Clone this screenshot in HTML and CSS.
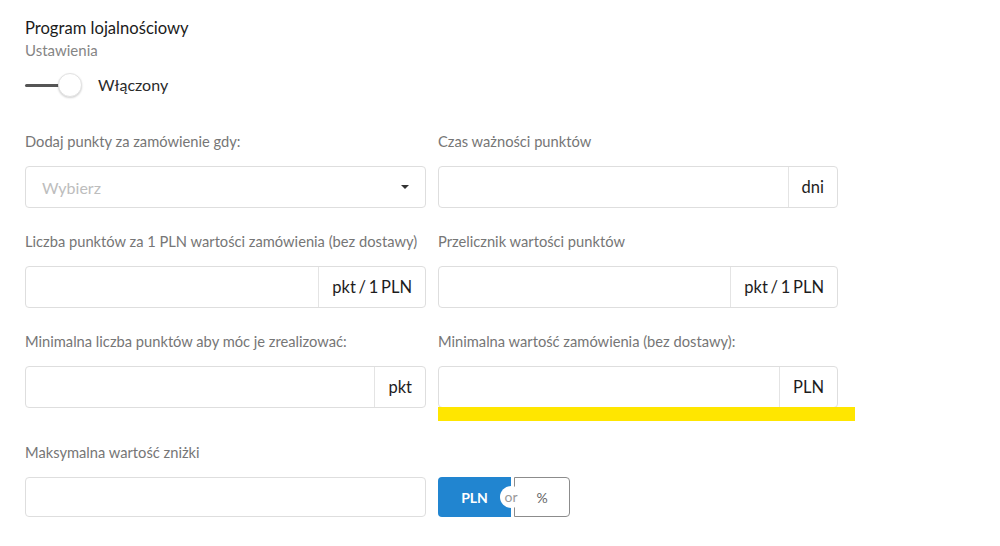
FILE: index.html
```html
<!DOCTYPE html>
<html lang="pl">
<head>
<meta charset="utf-8">
<title>Program lojalnościowy</title>
<link rel="stylesheet" href="styles.css">
</head>
<body>
<div class="page">
  <div class="title">Program lojalnościowy</div>
  <div class="subtitle">Ustawienia</div>
  <div class="toggle">
    <span class="switch"></span>
    <span class="toggle-label">Włączony</span>
  </div>

  <div class="form">
    <div class="cell">
      <div class="label">Dodaj punkty za zamówienie gdy:</div>
      <div class="input-group select">
        <span class="placeholder">Wybierz</span>
        <span class="caret"></span>
      </div>
    </div>
    <div class="cell">
      <div class="label">Czas ważności punktów</div>
      <div class="input-group">
        <span class="field"></span>
        <span class="addon">dni</span>
      </div>
    </div>

    <div class="cell">
      <div class="label">Liczba punktów za 1 PLN wartości zamówienia (bez dostawy)</div>
      <div class="input-group">
        <span class="field"></span>
        <span class="addon">pkt / 1 PLN</span>
      </div>
    </div>
    <div class="cell">
      <div class="label">Przelicznik wartości punktów</div>
      <div class="input-group">
        <span class="field"></span>
        <span class="addon">pkt / 1 PLN</span>
      </div>
    </div>

    <div class="cell">
      <div class="label">Minimalna liczba punktów aby móc je zrealizować:</div>
      <div class="input-group">
        <span class="field"></span>
        <span class="addon">pkt</span>
      </div>
    </div>
    <div class="cell">
      <div class="label">Minimalna wartość zamówienia (bez dostawy):</div>
      <div class="input-group">
        <span class="field"></span>
        <span class="addon">PLN</span>
      </div>
      <div class="highlight"></div>
    </div>

    <div class="cell">
      <div class="label">Maksymalna wartość zniżki</div>
      <div class="input-group short">
        <span class="field"></span>
      </div>
    </div>
    <div class="cell cell-end">
      <div class="btn-group">
        <span class="btn-pln">PLN<span class="or">or</span></span>
        <span class="btn-pct">%</span>
      </div>
    </div>
  </div>
</div>
</body>
</html>
```

FILE: styles.css
```css
html, body {
  margin: 0;
  padding: 0;
  background: #ffffff;
}

body {
  font-family: Lato, "Open Sans", "Liberation Sans", sans-serif;
  color: #1f1f1f;
}

.page {
  padding: 18px 0 0 25px;
}

.title {
  font-size: 16.6px;
  line-height: 20px;
  color: #1b1b1b;
}

.subtitle {
  margin-top: 3px;
  font-size: 15px;
  line-height: 18px;
  color: #858585;
}

.toggle {
  display: flex;
  align-items: center;
  gap: 16px;
  margin-top: 14px;
  height: 24px;
}

.switch {
  position: relative;
  width: 57px;
  height: 24px;
  display: block;
}

.switch::before {
  content: "";
  position: absolute;
  left: 0;
  top: 11px;
  width: 46px;
  height: 3px;
  border-radius: 2px;
  background: #555555;
}

.switch::after {
  content: "";
  position: absolute;
  right: 0;
  top: 0;
  width: 24px;
  height: 24px;
  box-sizing: border-box;
  border-radius: 50%;
  background: #ffffff;
  border: 1px solid #e2e2e2;
  box-shadow: 0 1px 2px rgba(0, 0, 0, 0.18);
}

.toggle-label {
  font-size: 16px;
  line-height: 20px;
  color: #2a2a2a;
}

.form {
  display: grid;
  grid-template-columns: 401px 400px;
  column-gap: 12px;
  row-gap: 24px;
  margin-top: 35px;
}

.cell-end {
  align-self: end;
}

.label {
  font-size: 14.7px;
  line-height: 18px;
  color: #767676;
  margin-bottom: 16px;
  white-space: nowrap;
}

.input-group {
  display: flex;
  height: 42px;
  box-sizing: border-box;
  border: 1px solid #dedede;
  border-radius: 4px;
  background: #ffffff;
}

.input-group.short {
  height: 40px;
}

.field {
  flex: 1;
}

.addon {
  display: flex;
  align-items: center;
  justify-content: center;
  padding: 0 13px;
  border-left: 1px solid #e4e4e4;
  font-size: 16.5px;
  color: #1d1d1d;
  white-space: nowrap;
  word-spacing: -1.5px;
}

.select {
  align-items: center;
  justify-content: space-between;
  padding: 0 16px;
}

.placeholder {
  font-size: 16px;
  color: #bdbdbd;
}

.caret {
  width: 0;
  height: 0;
  border-left: 4px solid transparent;
  border-right: 4px solid transparent;
  border-top: 4px solid #333333;
}

.highlight {
  width: 417px;
  height: 14px;
  margin-top: -1px;
  margin-bottom: -2px;
  background: #ffe600;
}

.btn-group {
  display: flex;
  height: 40px;
}

.btn-pln {
  position: relative;
  width: 73px;
  display: flex;
  align-items: center;
  justify-content: center;
  background: #2185d0;
  color: #ffffff;
  font-size: 14px;
  font-weight: 700;
  border-radius: 4px 0 0 4px;
}

.or {
  position: absolute;
  right: -11px;
  top: 9px;
  width: 22px;
  height: 22px;
  border-radius: 50%;
  background: #ffffff;
  color: #9a9a9a;
  font-size: 14px;
  font-weight: 400;
  line-height: 21px;
  text-align: center;
  z-index: 2;
}

.btn-pct {
  width: 56px;
  margin-left: 3px;
  box-sizing: border-box;
  display: flex;
  align-items: center;
  justify-content: center;
  border: 1px solid #8c8c8c;
  border-radius: 0 4px 4px 0;
  color: #666666;
  font-size: 14px;
}
```
